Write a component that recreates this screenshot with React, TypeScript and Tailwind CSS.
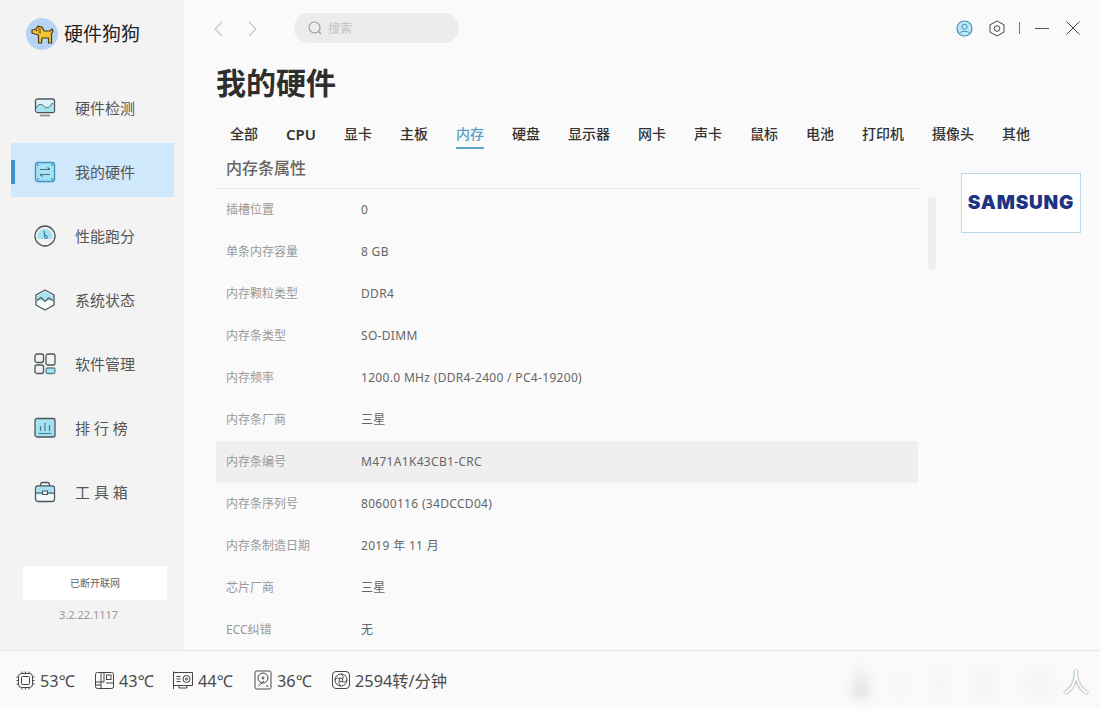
import type { ReactNode } from "react";

const cjk = "font-['Noto_Sans','Noto_Sans_CJK_SC',sans-serif]";

const line = "#4d5558";
const tint = "#a6e3f2";

function DogLogo() {
  return (
    <div className="w-8 h-8 rounded-full bg-[#b7d3f4] flex items-center justify-center shrink-0">
      <svg width="26" height="26" viewBox="0 0 26 26">
        <path
          d="M3 9 L7 8 L9 5 L13 6 L15 10 L21 10 L23 8 L24 10 L22.500 13 L22.500 22 L19.500 22 L19.500 17 L13 17 L12.500 22 L9.500 22 L9.500 14 L6 13 L3 12 Z"
          fill="#f2c230"
          stroke="#4a3b14"
          strokeWidth="1.200"
          strokeLinejoin="round"
        />
        <path d="M9 6 L12 7 L12 13 L9.500 12 Z" fill="#b47d16" />
        <circle cx="7.500" cy="9.500" r="0.800" fill="#222" />
      </svg>
    </div>
  );
}

function MonitorIcon() {
  return (
    <svg width="22" height="22" viewBox="0 0 22 22" fill="none">
      <rect x="1.500" y="2" width="19" height="13.500" rx="2" fill="#dff5fb" stroke={line} strokeWidth="1.300" />
      <path d="M2 11 C5 6 8 7 10.500 9.500 C13 12 16 10 17 7.500 C18 6 19.500 6.500 20 7.500 L20 14.500 L2 14.500 Z" fill={tint} />
      <path d="M2 11 C5 6 8 7 10.500 9.500 C13 12 16 10 17 7.500 C18 6 19.500 6.500 20 7.500" stroke={line} strokeWidth="1" />
      <path d="M6 18.500 H16" stroke="#8b9295" strokeWidth="1.800" />
    </svg>
  );
}

function HardwareIcon() {
  return (
    <svg width="22" height="22" viewBox="0 0 22 22" fill="none" className="relative">
      <rect x="1.500" y="1.500" width="19" height="19" rx="2.500" fill={tint} stroke="#3f94c4" strokeWidth="1.400" />
      <path d="M6 8.500 H16 M13.500 6.500 L16 8.500 M16 13.500 H6 M8.500 15.500 L6 13.500" stroke="#4d6f84" strokeWidth="1.200" />
      <circle cx="4" cy="4" r="1" fill="#3f94c4" />
      <circle cx="18" cy="4" r="1" fill="#3f94c4" />
      <circle cx="4" cy="18" r="1" fill="#3f94c4" />
      <circle cx="18" cy="18" r="1" fill="#3f94c4" />
    </svg>
  );
}

function GaugeIcon() {
  return (
    <svg width="22" height="22" viewBox="0 0 22 22" fill="none">
      <circle cx="11" cy="11" r="10" stroke={line} strokeWidth="1.300" />
      <path d="M4 14 A7.500 7.500 0 1 1 18 14 Z" fill={tint} />
      <path d="M10 6 L11 11.500" stroke="#3d7f9c" strokeWidth="1.300" />
      <circle cx="12" cy="12" r="1.500" stroke="#3d7f9c" strokeWidth="1" />
    </svg>
  );
}

function StatusIcon() {
  return (
    <svg width="22" height="22" viewBox="0 0 22 22" fill="none">
      <path d="M11 1 L20 6 V16 L11 21 L2 16 V6 Z" fill="#f6fbfc" stroke={line} strokeWidth="1.300" strokeLinejoin="round" />
      <path d="M11 2.500 L19 7 V11.500 H2.800 V7 Z" fill={tint} />
      <path d="M3 11.500 L7 8.500 L11 12.500 L14.500 9 L19 11.500" stroke={line} strokeWidth="1.100" />
    </svg>
  );
}

function AppsIcon() {
  return (
    <svg width="22" height="22" viewBox="0 0 22 22" fill="none" stroke={line} strokeWidth="1.300">
      <rect x="1" y="1" width="8.500" height="8.500" rx="2" />
      <rect x="1" y="12" width="8.500" height="8.500" rx="2" />
      <rect x="12" y="1" width="9" height="11" rx="2" />
      <rect x="12" y="15" width="9" height="5.500" rx="1.500" fill={tint} stroke="#5a8898" />
    </svg>
  );
}

function RankIcon() {
  return (
    <svg width="22" height="22" viewBox="0 0 22 22" fill="none">
      <rect x="1" y="1.500" width="20" height="18.500" rx="2" fill={tint} stroke={line} strokeWidth="1.300" />
      <path d="M6.500 9 V14 M11 6 V14 M15.500 8 V14" stroke="#4d7f92" strokeWidth="1.300" />
      <path d="M4.500 16.500 H17.500" stroke="#4d7f92" strokeWidth="1.100" />
    </svg>
  );
}

function ToolboxIcon() {
  return (
    <svg width="22" height="22" viewBox="0 0 22 22" fill="none">
      <path d="M6.500 5 V3.500 A2 2 0 0 1 8.500 1.500 H13.500 A2 2 0 0 1 15.500 3.500 V5" stroke={line} strokeWidth="1.300" />
      <rect x="1.500" y="5" width="19" height="15.500" rx="2.500" fill="#f4fbfd" stroke={line} strokeWidth="1.300" />
      <path d="M2.200 7 A1.500 1.500 0 0 1 3.700 5.700 H18.300 A1.500 1.500 0 0 1 19.800 7 V13.500 H2.200 Z" fill={tint} />
      <path d="M2 12 H20" stroke={line} strokeWidth="1.100" />
      <rect x="8.500" y="10" width="5" height="3.500" fill="#dff5fb" stroke={line} strokeWidth="1" />
    </svg>
  );
}

function CpuIcon() {
  return (
    <svg width="19" height="19" viewBox="0 0 19 19" fill="none" stroke="#444" strokeWidth="1">
      <rect x="2.500" y="2.500" width="14" height="14" rx="3" />
      <rect x="5.500" y="5.500" width="8" height="8" rx="1" />
      <path d="M6 0.500 V2.500 M9.500 0.500 V2.500 M13 0.500 V2.500 M6 16.500 V18.500 M9.500 16.500 V18.500 M13 16.500 V18.500 M0.500 6 H2.500 M0.500 9.500 H2.500 M0.500 13 H2.500 M16.500 6 H18.500 M16.500 9.500 H18.500 M16.500 13 H18.500" />
    </svg>
  );
}

function BoardIcon() {
  return (
    <svg width="19" height="19" viewBox="0 0 19 19" fill="none" stroke="#444" strokeWidth="1">
      <rect x="0.500" y="1.500" width="18" height="16" rx="2" />
      <path d="M6 1.500 V17.500 M9 1.500 V11 M0.500 11 H9 M0.500 14 H6" />
      <rect x="11.500" y="4" width="4.500" height="4.500" />
      <path d="M11 12 H18" />
    </svg>
  );
}

function GpuIcon() {
  return (
    <svg width="20" height="20" viewBox="0 0 20 20" fill="none" stroke="#444" strokeWidth="1">
      <path d="M0.500 1.500 V19 M0.500 2.500 H19.500 V15.500 H0.500" />
      <circle cx="13.500" cy="9" r="3.500" />
      <circle cx="13.500" cy="9" r="1" />
      <path d="M3.500 6.500 H7.500 M3.500 9 H7.500 M3.500 11.500 H7.500 M6 15.500 V18 H14 V15.500" />
    </svg>
  );
}

function DiskIcon() {
  return (
    <svg width="18" height="20" viewBox="0 0 18 20" fill="none" stroke="#444" strokeWidth="1">
      <rect x="1" y="1" width="16" height="18" rx="1.500" />
      <circle cx="9" cy="8" r="5" />
      <circle cx="9" cy="8" r="1" />
      <path d="M4.500 16 L10 11 M12 16 H14.500" />
    </svg>
  );
}

function FanIcon() {
  return (
    <svg width="18" height="18" viewBox="0 0 18 18" fill="none" stroke="#444" strokeWidth="1">
      <rect x="0.500" y="0.500" width="17" height="17" rx="3.500" />
      <circle cx="9" cy="9" r="6" />
      <circle cx="9" cy="9" r="1.800" />
      <path d="M9 3 C12 5 11 7 10.500 8 M15 9 C13 12 11 11 10 10.500 M9 15 C6 13 7 11 7.500 10 M3 9 C5 6 7 7 8 7.500" />
    </svg>
  );
}

function NavItem({ icon, label, active }: { icon: ReactNode; label: string; active?: boolean }) {
  return (
    <div className="relative w-[163px] h-[54px] ml-[11px] flex items-center pl-[23px] gap-[19px]">
      {active && <span className="absolute left-0 top-[-2px] w-full h-[54px] bg-[#cfe8fb]" />}
      {active && <span className="absolute left-0 top-[15px] w-1 h-6 bg-[#3c95cd]" />}
      {icon}
      <span className="relative text-[15px] text-[#555] whitespace-pre">{label}</span>
    </div>
  );
}

function Temp({ icon, value, className }: { icon: ReactNode; value: string; className: string }) {
  return (
    <div className={`flex items-center gap-[5px] ${className}`}>
      {icon}
      <span className="pt-[2px] text-[16.300px] text-[#4a4a4a] leading-none">{value}</span>
    </div>
  );
}

const tabs = ["全部", "CPU", "显卡", "主板", "内存", "硬盘", "显示器", "网卡", "声卡", "鼠标", "电池", "打印机", "摄像头", "其他"];

const rows = [
  ["插槽位置", "0"],
  ["单条内存容量", "8 GB"],
  ["内存颗粒类型", "DDR4"],
  ["内存条类型", "SO-DIMM"],
  ["内存频率", "1200.0 MHz (DDR4-2400 / PC4-19200)"],
  ["内存条厂商", "三星"],
  ["内存条编号", "M471A1K43CB1-CRC"],
  ["内存条序列号", "80600116 (34DCCD04)"],
  ["内存条制造日期", "2019 年 11 月"],
  ["芯片厂商", "三星"],
  ["ECC纠错", "无"],
];

export default function App() {
  return (
    <div className={`relative w-[1100px] h-[709px] overflow-hidden flex flex-col bg-[#fafafa] ${cjk}`}>
      <div className="flex h-[650px]">
        {/* sidebar */}
        <aside className="w-[184px] bg-[#f3f3f3] flex flex-col">
          <div className="h-[81px] pl-[26px] pt-[18px] flex items-start gap-[6px]">
            <DogLogo />
            <span className="text-[19px] leading-8 text-[#222]">硬件狗狗</span>
          </div>
          <nav className="flex flex-col gap-[10px]">
            <NavItem icon={<MonitorIcon />} label="硬件检测" />
            <NavItem icon={<HardwareIcon />} label="我的硬件" active />
            <NavItem icon={<GaugeIcon />} label="性能跑分" />
            <NavItem icon={<StatusIcon />} label="系统状态" />
            <NavItem icon={<AppsIcon />} label="软件管理" />
            <NavItem icon={<RankIcon />} label="排 行 榜" />
            <NavItem icon={<ToolboxIcon />} label="工 具 箱" />
          </nav>
          <div className="mt-[47px] ml-[23px] w-[144px] h-[34px] bg-white flex items-center justify-center text-[10px] text-[#666]">
            已断开联网
          </div>
          <div className="mt-[7px] w-[177px] text-center text-[11px] leading-4 text-[#999]">3.2.22.1117</div>
        </aside>

        {/* main */}
        <main className="flex-1 flex flex-col">
          <div className="h-[58px] flex items-start pt-[13px]">
            <div className="w-[110px] h-[32px] pl-[29px] flex items-center gap-[25px] text-[#c4c4c4]">
              <svg width="10" height="16" viewBox="0 0 10 16" fill="none" stroke="currentColor" strokeWidth="1.100">
                <path d="M9 1 L2 8 L9 15" />
              </svg>
              <svg width="10" height="16" viewBox="0 0 10 16" fill="none" stroke="currentColor" strokeWidth="1.100">
                <path d="M1 1 L8 8 L1 15" />
              </svg>
            </div>
            <div className="w-[165px] h-[30px] rounded-full bg-[#ececec] flex items-center pl-[14px] gap-[6px]">
              <svg width="14" height="14" viewBox="0 0 14 14" fill="none" stroke="#9a9a9a" strokeWidth="1.100">
                <circle cx="6.500" cy="6.500" r="5.500" />
                <path d="M10.500 10.500 L13 13" />
              </svg>
              <span className="pt-[2px] text-xs text-[#c2c2c2]">搜索</span>
            </div>
            <div className="ml-auto mr-[20px] h-[30px] flex items-center">
              <svg width="17" height="17" viewBox="0 0 17 17" fill="none">
                <circle cx="8.500" cy="8.500" r="7.500" fill="#bfe6f7" stroke="#3f8fc0" strokeWidth="1.200" />
                <circle cx="8.500" cy="6.800" r="2.600" stroke="#3f8fc0" strokeWidth="1" />
                <path d="M3.800 13 C5 10.800 12 10.800 13.200 13" stroke="#3f8fc0" strokeWidth="1" />
              </svg>
              <svg className="ml-[16px]" width="16" height="17" viewBox="0 0 16 17" fill="none" stroke="#444" strokeWidth="1">
                <path d="M8 1 L15 4.800 V12.200 L8 16 L1 12.200 V4.800 Z" strokeLinejoin="round" />
                <circle cx="8" cy="8.500" r="2.800" />
              </svg>
              <span className="ml-[14px] w-px h-3 bg-[#777]" />
              <span className="ml-[15px] w-[14px] h-px bg-[#555]" />
              <svg className="ml-[17px]" width="14" height="14" viewBox="0 0 14 14" fill="none" stroke="#444" strokeWidth="1">
                <path d="M0.500 0.500 L13.500 13.500 M13.500 0.500 L0.500 13.500" />
              </svg>
            </div>
          </div>

          <h1 className="h-[50px] pl-8 text-[30px] leading-[50px] font-bold text-[#2e2e2e]">我的硬件</h1>

          <div className="mt-3 pl-[46px] flex gap-7">
            {tabs.map((tab) => (
              <div
                key={tab}
                className={`h-[29px] font-medium leading-7 ${tab === "CPU" ? "w-[30px] text-[15px] font-semibold whitespace-nowrap" : "text-sm"} ${
                  tab === "内存" ? "text-[#5b9fc6] border-b-2 border-[#5ba6c9]" : "text-[#333]"
                }`}
              >
                {tab}
              </div>
            ))}
          </div>

          <div className="flex-1 flex min-h-0">
            <div className="ml-8 w-[702px]">
              <div className="h-[39.500px] pl-[10px] flex items-center border-b border-[#e8e8e8] text-base font-medium text-[#666]">
                内存条属性
              </div>
              {rows.map(([label, value]) => (
                <div
                  key={label}
                  className={`h-[42px] pl-[10px] flex items-center text-xs ${label === "内存条编号" ? "bg-[#efefef]" : ""}`}
                >
                  <span className="w-[135px] text-[#999]">{label}</span>
                  <span className="text-[#666] tracking-[0.320px]">{value}</span>
                </div>
              ))}
            </div>
            <div className="ml-[10px] mt-[48px] w-2 h-[73px] rounded-b bg-[#efefef]" />
            <div className="ml-[25px] mt-6 w-[120px] h-[60px] bg-white border border-[#bcd8e8] flex items-center justify-center font-['Inter',sans-serif] text-[19px] font-black tracking-[0.800px] text-[#1d3384]">
              SAMSUNG
            </div>
          </div>
        </main>
      </div>

      {/* status bar */}
      <footer className="h-[59px] border-t border-[#e6e6e6] flex items-center pl-[16px]">
        <Temp icon={<CpuIcon />} value="53℃" className="w-[79px]" />
        <Temp icon={<BoardIcon />} value="43℃" className="w-[78px]" />
        <Temp icon={<GpuIcon />} value="44℃" className="w-[81px]" />
        <Temp icon={<DiskIcon />} value="36℃" className="w-[78px]" />
        <Temp icon={<FanIcon />} value="2594转/分钟" className="" />
      </footer>

      {/* watermark */}
      <div className="absolute left-[852px] top-[664px] flex items-end gap-[24px] blur-[4px]">
        <div className="w-[18px] h-[34px] bg-gradient-to-b from-[#f8f8f8] to-[#e0e0e0]" />
        <div className="w-[12px] h-[26px] bg-[#f7f7f7]" />
        <div className="w-[20px] h-[26px] bg-[#f6f6f6]" />
        <div className="w-[24px] h-[28px] bg-[#f5f5f5]" />
        <div className="w-[34px] h-[28px] bg-[#f6f6f6]" />
      </div>
      <span className="absolute left-[1063px] top-[664px] text-[26px] leading-9 text-white [text-shadow:0_0_2px_#555]">人</span>
    </div>
  );
}
